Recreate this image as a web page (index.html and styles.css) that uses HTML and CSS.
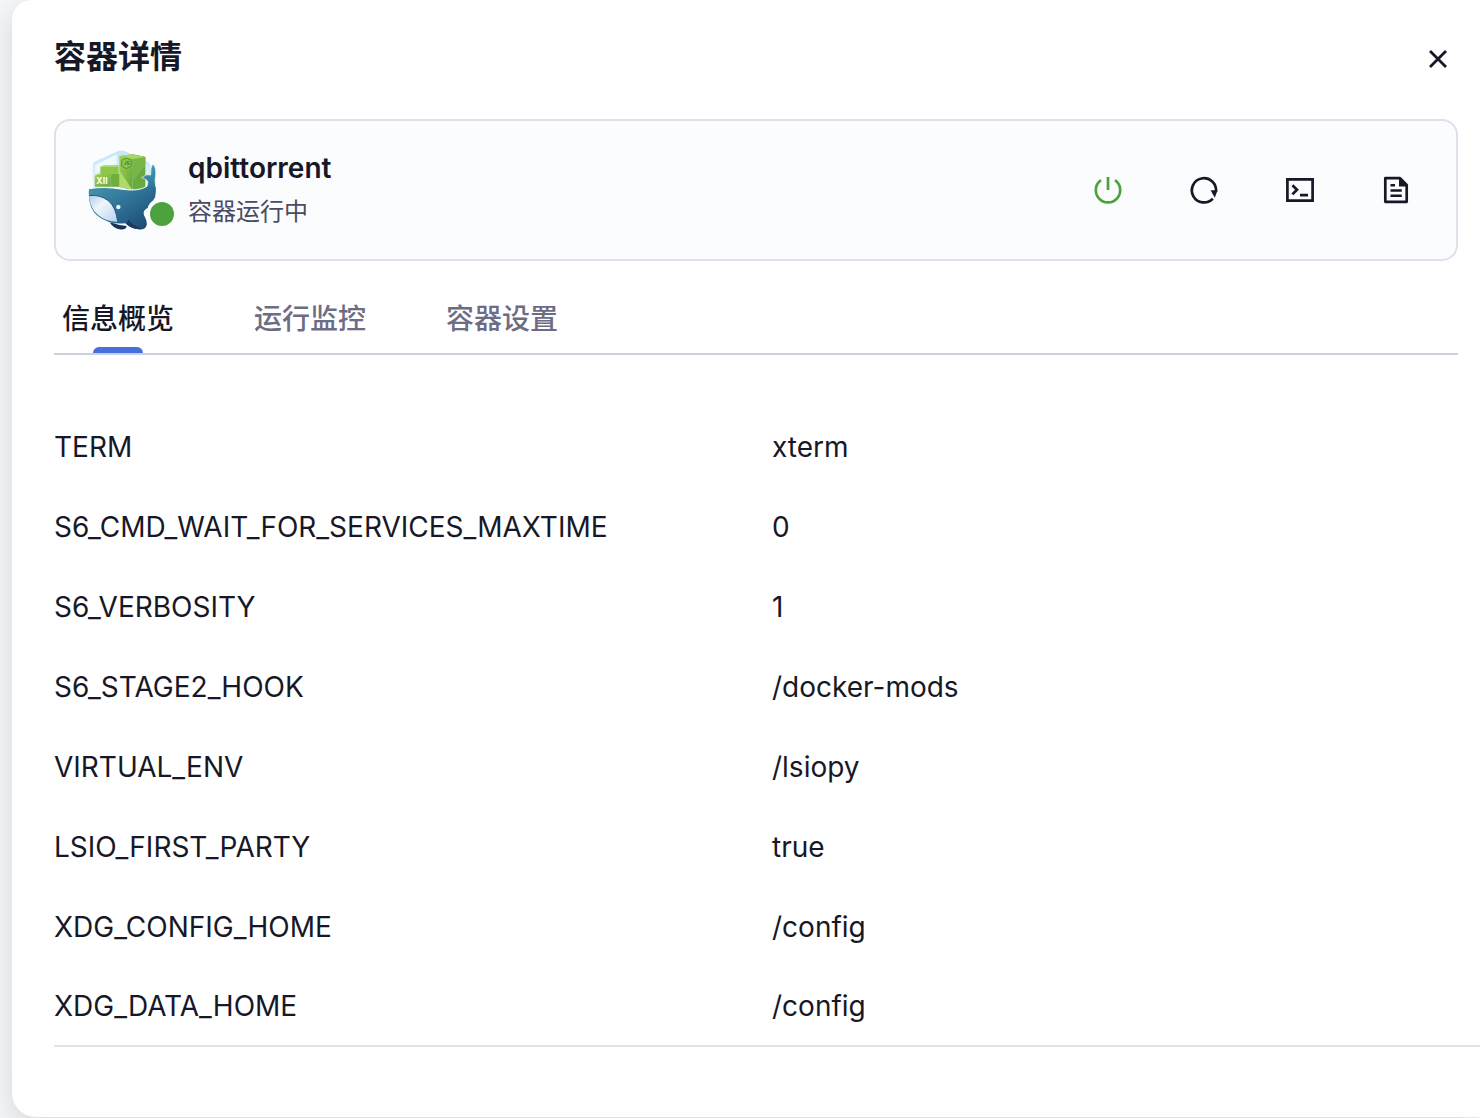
FILE: index.html
```html
<!DOCTYPE html>
<html lang="zh-CN">

<head>
    <meta charset="UTF-8">
    <meta name="viewport" content="width=device-width, initial-scale=1">
    <title>容器详情</title>
    <link rel="stylesheet" href="styles.css">
</head>

<body>
    <main class="drawer">
        <header class="drawer-header">
            <h1>容器详情</h1>
            <button type="button" class="icon-btn" aria-label="关闭">
                <svg viewBox="0 0 32 32"><path d="M9 9l14 14M23 9L9 23" fill="none" stroke="currentColor" stroke-width="2.8" stroke-linecap="square"/></svg>
            </button>
        </header>

        <section class="card">
            <div class="logo">
                <svg viewBox="54 23 240 252" aria-hidden="true">
                    <defs>
                        <linearGradient id="body" x1="0" y1="0" x2="1" y2="1">
                            <stop offset="0" stop-color="#4695ad"/>
                            <stop offset=".5" stop-color="#2c6f94"/>
                            <stop offset="1" stop-color="#1b426e"/>
                        </linearGradient>
                        <linearGradient id="tail" x1="0" y1="0" x2="0" y2="1">
                            <stop offset="0" stop-color="#3f9cb5"/>
                            <stop offset="1" stop-color="#2b6189"/>
                        </linearGradient>
                        <linearGradient id="belly" x1="0" y1="0" x2="1" y2="1">
                            <stop offset="0" stop-color="#b4cdee"/>
                            <stop offset=".4" stop-color="#eef5fc"/>
                            <stop offset="1" stop-color="#b9d2ee"/>
                        </linearGradient>
                        <linearGradient id="box" x1="0" y1="0" x2="1" y2="1">
                            <stop offset="0" stop-color="#a6d155"/>
                            <stop offset="1" stop-color="#62a63a"/>
                        </linearGradient>
                        <linearGradient id="sky" x1="0" y1="0" x2="0" y2="1">
                            <stop offset="0" stop-color="#c4e6f5"/>
                            <stop offset="1" stop-color="#e8f6fc"/>
                        </linearGradient>
                    </defs>
                    <path d="M68 74Q69 66 77 62L145 32Q155 29 165 33L230 63Q242 69 242 80V148H68z" fill="url(#sky)"/>
                    <path d="M76 75L140 42V70L76 98z" fill="#f0fafe"/>
                    <!-- crates -->
                    <path d="M91 79L103 75H146V103H91z" fill="#8fc64c"/>
                    <path d="M91 79L103 75H146V79z" fill="#b8df76"/>
                    <path d="M74 106L84 101H128L121 106V139H74z" fill="url(#box)"/>
                    <path d="M121 106L128 101H156V139H121z" fill="#6dae3c"/>
                    <path d="M148 47L187 42V148L148 140z" fill="url(#box)"/>
                    <path d="M187 42L226 50V149L187 148z" fill="#6aab40"/>
                    <path d="M187 42L226 50V74L187 125z" fill="#78b648"/>
                    <path d="M148 47L187 42L226 50L190 56z" fill="#a8d662"/>
                    <path d="M148 90L187 148L148 140z" fill="#b0d969"/>
                    <path d="M169 53L183 60V77L169 85L155 77V60z" fill="#8dc552" stroke="#397e30" stroke-width="2"/>
                    <text class="crate-js" x="161" y="75">JS</text>
                    <text class="crate-text" x="79" y="132">XII</text>
                    <!-- whale -->
                    <path d="M248 71Q260 79 257 108Q254 117 256 128Q260 151 256 173L220 178L233 130Q237 118 215 112Q230 99 242 104Q241 82 248 71z" fill="url(#tail)" stroke="#fff" stroke-width="2"/>
                    <path d="M119 246Q142 254 170 257Q168 270 148 267Q130 264 119 246z" fill="#16345b"/>
                    <path d="M57 145Q100 137 158 147Q205 154 231 138L257 140Q258 166 250 180Q236 190 233 203Q214 212 225 231Q232 245 230 255Q226 270 204 267Q180 264 166 249Q118 254 82 226Q52 201 57 145z" fill="url(#body)"/>
                    <path d="M57 145Q100 137 158 147Q205 154 231 138" fill="none" stroke="#fff" stroke-width="3"/>
                    <path d="M57 166Q90 162 115 181Q138 200 143 244Q109 245 84 224Q60 204 57 166z" fill="url(#belly)"/>
                    <path d="M57 166Q90 162 115 181Q138 200 143 244" fill="none" stroke="#2a5686" stroke-width="3"/>
                    <path d="M175 238Q189 257 218 265Q190 271 169 250z" fill="#1a3a64"/>
                    <circle cx="145" cy="200" r="7" fill="#b8dae8"/>
                    <circle cx="145" cy="200" r="5" fill="#ffffff"/>
                </svg>
                <span class="status-dot"></span>
            </div>
            <div class="summary">
                <h2>qbittorrent</h2>
                <p>容器运行中</p>
            </div>
            <div class="actions">
                <button type="button" class="icon-btn power" aria-label="停止">
                    <svg viewBox="0 0 32 32"><path d="M9 6.2A12.2 12.2 0 1 0 23 6.2M16 3v13" fill="none" stroke="currentColor" stroke-width="2.7"/></svg>
                </button>
                <button type="button" class="icon-btn" aria-label="重启">
                    <svg viewBox="0 0 32 32">
                        <path d="M24.8 24.6A12.1 12.1 0 1 1 28 17.5" fill="none" stroke="currentColor" stroke-width="2.7"/>
                        <path d="M22.6 16.2H29.6L26.8 23.8z" fill="currentColor"/>
                    </svg>
                </button>
                <button type="button" class="icon-btn" aria-label="终端">
                    <svg viewBox="0 0 32 32"><path d="M3.4 5.4H28.6V26.6H3.4zM8.4 11.2L13 15.8L8.4 20.4M16 21.2H24" fill="none" stroke="currentColor" stroke-width="2.7"/></svg>
                </button>
                <button type="button" class="icon-btn" aria-label="日志">
                    <svg viewBox="0 0 32 32">
                        <path d="M20 4.2H5.3V27.8H26.7V11z" fill="none" stroke="currentColor" stroke-width="2.7" stroke-linejoin="round"/>
                        <path d="M19 3.5V12.5H28z" fill="currentColor"/>
                        <path d="M10.5 11.2H15M10.5 16.5H21.8M10.5 21.8H21.8" fill="none" stroke="currentColor" stroke-width="2.5"/>
                    </svg>
                </button>
            </div>
        </section>

        <nav class="tabs" role="tablist">
            <button type="button" class="tab active" role="tab" aria-selected="true">信息概览</button>
            <button type="button" class="tab" role="tab" aria-selected="false">运行监控</button>
            <button type="button" class="tab" role="tab" aria-selected="false">容器设置</button>
        </nav>

        <div class="table-wrap">
            <table class="env">
                <tbody>
                    <tr><th scope="row">TERM</th><td>xterm</td></tr>
                    <tr><th scope="row">S6_CMD_WAIT_FOR_SERVICES_MAXTIME</th><td>0</td></tr>
                    <tr><th scope="row">S6_VERBOSITY</th><td>1</td></tr>
                    <tr><th scope="row">S6_STAGE2_HOOK</th><td>/docker-mods</td></tr>
                    <tr><th scope="row">VIRTUAL_ENV</th><td>/lsiopy</td></tr>
                    <tr><th scope="row">LSIO_FIRST_PARTY</th><td>true</td></tr>
                    <tr><th scope="row">XDG_CONFIG_HOME</th><td>/config</td></tr>
                    <tr><th scope="row">XDG_DATA_HOME</th><td>/config</td></tr>
                </tbody>
            </table>
        </div>
    </main>
</body>

</html>
```
FILE: styles.css
```css
* {
    box-sizing: border-box;
}

body {
    margin: 0;
    min-height: 100vh;
    display: flex;
    padding: 0 0 1px 12px;
    overflow-x: hidden;
    background: #f6f7f9;
    color: #171827;
    font-family: Inter, "Noto Sans CJK SC", sans-serif;
    font-size: 28px;
}

h1,
h2,
p {
    margin: 0;
}

.drawer {
    flex: 1;
    min-width: 0;
    padding: 33px 22px 70px 42px;
    overflow: hidden;
    background: #fff;
    border-radius: 20px 0 0 24px;
    box-shadow: 0 8px 32px rgba(0, 0, 0, .14);
}

.drawer-header {
    display: flex;
    justify-content: space-between;
    align-items: flex-end;
    padding-right: 4px;
    margin-bottom: 44px;
}

.drawer-header h1 {
    font-size: 32px;
    line-height: 48px;
    height: 42px;
    font-weight: 600;
}

.icon-btn {
    width: 32px;
    height: 32px;
    padding: 0;
    border: 0;
    background: none;
    color: #171827;
    cursor: pointer;
}

.icon-btn svg {
    display: block;
    width: 32px;
    height: 32px;
}

.card {
    display: flex;
    align-items: center;
    height: 142px;
    padding: 0 44px 0 32px;
    background: #fbfcfe;
    border: 2px solid #dfe0ea;
    border-radius: 16px;
}

.logo {
    position: relative;
    width: 80px;
    height: 84px;
    margin-right: 20px;
}

.logo svg {
    display: block;
    width: 80px;
    height: 84px;
}

.crate-text {
    font: 700 26px Inter, sans-serif;
    fill: #fff;
}

.crate-js {
    font: 700 14px Inter, sans-serif;
    fill: #397e30;
}

.status-dot {
    position: absolute;
    right: -6px;
    bottom: 6px;
    width: 24px;
    height: 24px;
    border-radius: 50%;
    background: #4ca23d;
}

.summary {
    flex: 1;
}

.summary h2 {
    font-size: 28px;
    line-height: 44px;
    font-weight: 600;
}

.summary p {
    font-size: 24px;
    line-height: 44px;
    color: #4a4b62;
}

.actions {
    display: flex;
    gap: 64px;
}

.power {
    color: #4ca23d;
}

.tabs {
    display: flex;
    gap: 64px;
    margin-top: 26px;
    border-bottom: 2px solid #cfd0df;
}

.tab {
    position: relative;
    height: 66px;
    padding: 0 8px 6px;
    border: 0;
    background: none;
    color: #6c6d84;
    font: inherit;
    font-weight: 500;
    cursor: pointer;
}

.tab.active {
    color: #171827;
}

.tab.active::after {
    content: "";
    position: absolute;
    left: 50%;
    bottom: 0;
    width: 50px;
    height: 6px;
    margin-left: -25px;
    border-radius: 6px 6px 0 0;
    background: #456fd9;
}

/* the table runs past the drawer padding up to the window edge */
.table-wrap {
    margin: 52px -32px 0 0;
}

.env {
    width: 100%;
    table-layout: fixed;
    border-collapse: separate;
    border-spacing: 0;
}

.env th,
.env td {
    height: 80px;
    padding: 0;
    font-weight: 400;
    text-align: left;
    vertical-align: middle;
}

.env tr:last-child th,
.env tr:last-child td {
    border-bottom: 2px solid #e3e3e5;
}
```
